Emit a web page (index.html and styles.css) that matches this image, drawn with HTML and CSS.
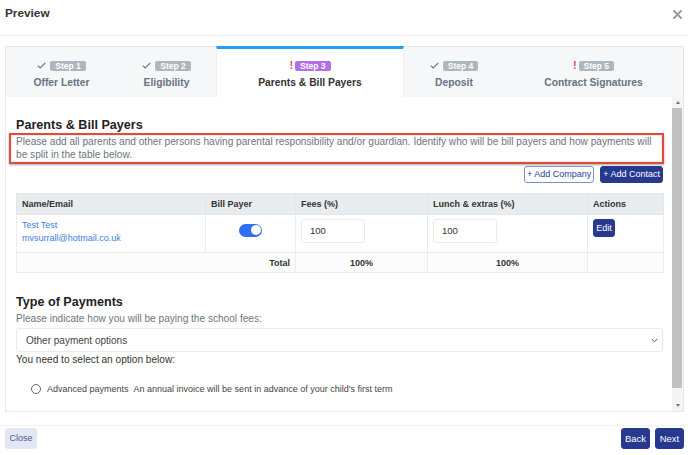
FILE: index.html
```html
<!DOCTYPE html>
<html lang="en">
<head>
<meta charset="utf-8">
<title>Preview</title>
<link rel="stylesheet" href="styles.css">
</head>
<body>
<div class="modal">
  <header class="modal-header">
    <h1 class="modal-title">Preview</h1>
    <svg class="close-x" width="9" height="9" viewBox="0 0 9 9"><path d="M1 1L8 8M8 1L1 8" stroke="#9a9a9a" stroke-width="2" stroke-linecap="round"/></svg>
  </header>

  <nav class="steps">
    <div class="step">
      <div class="step-top"><svg class="check" width="9" height="7" viewBox="0 0 9 7"><path d="M0.8 3.6L3.2 6L8.3 0.8" fill="none" stroke="#6c757d" stroke-width="1.2"/></svg><span class="badge">Step 1</span></div>
      <div class="step-label">Offer Letter</div>
    </div>
    <div class="step">
      <div class="step-top"><svg class="check" width="9" height="7" viewBox="0 0 9 7"><path d="M0.8 3.6L3.2 6L8.3 0.8" fill="none" stroke="#6c757d" stroke-width="1.2"/></svg><span class="badge">Step 2</span></div>
      <div class="step-label">Eligibility</div>
    </div>
    <div class="step active">
      <div class="step-top"><span class="bang">!</span><span class="badge purple">Step 3</span></div>
      <div class="step-label">Parents &amp; Bill Payers</div>
    </div>
    <div class="step">
      <div class="step-top"><svg class="check" width="9" height="7" viewBox="0 0 9 7"><path d="M0.8 3.6L3.2 6L8.3 0.8" fill="none" stroke="#6c757d" stroke-width="1.2"/></svg><span class="badge">Step 4</span></div>
      <div class="step-label">Deposit</div>
    </div>
    <div class="step">
      <div class="step-top"><span class="bang">!</span><span class="badge">Step 5</span></div>
      <div class="step-label">Contract Signatures</div>
    </div>
  </nav>

  <section class="panel">
    <div class="panel-content">
      <h2 class="section-title">Parents &amp; Bill Payers</h2>
      <p class="note">Please add all parents and other persons having parental responsibility and/or guardian. Identify who will be bill payers and how payments will be split in the table below.</p>
      <div class="table-actions">
        <button class="btn btn-outline">+ Add Company</button>
        <button class="btn btn-primary">+ Add Contact</button>
      </div>
      <table class="payers">
        <colgroup>
          <col class="c-name"><col class="c-bill"><col class="c-fees"><col class="c-lunch"><col class="c-act">
        </colgroup>
        <thead>
          <tr><th>Name/Email</th><th>Bill Payer</th><th>Fees (%)</th><th>Lunch &amp; extras (%)</th><th>Actions</th></tr>
        </thead>
        <tbody>
          <tr class="row">
            <td class="name-cell"><div class="link">Test Test</div><div class="link">mvsurrall@hotmail.co.uk</div></td>
            <td class="center"><span class="toggle"><span class="knob"></span></span></td>
            <td><div class="num-input">100</div></td>
            <td><div class="num-input">100</div></td>
            <td><button class="btn btn-primary btn-edit">Edit</button></td>
          </tr>
          <tr class="total">
            <td colspan="2" class="right">Total</td>
            <td class="center">100%</td>
            <td class="center">100%</td>
            <td></td>
          </tr>
        </tbody>
      </table>

      <h2 class="section-title second">Type of Payments</h2>
      <p class="help">Please indicate how you will be paying the school fees:</p>
      <div class="select">
        <span>Other payment options</span>
        <svg width="7" height="5" viewBox="0 0 7 5"><path d="M0.8 1L3.5 3.8L6.2 1" fill="none" stroke="#555" stroke-width="1"/></svg>
      </div>
      <p class="prompt">You need to select an option below:</p>
      <label class="radio-row"><span class="radio"></span><span>Advanced payments</span><span class="radio-desc">An annual invoice will be sent in advance of your child's first term</span></label>
    </div>
    <div class="scrollbar">
      <span class="arrow up"></span>
      <span class="track"><span class="thumb"></span></span>
      <span class="arrow down"></span>
    </div>
  </section>

  <footer class="modal-footer">
    <button class="btn btn-light">Close</button>
    <div class="footer-right">
      <button class="btn btn-primary btn-foot">Back</button>
      <button class="btn btn-primary btn-foot">Next</button>
    </div>
  </footer>
</div>
</body>
</html>
```

FILE: styles.css
```css
* { box-sizing: border-box; }
html, body { margin: 0; padding: 0; }
body {
  width: 688px;
  height: 455px;
  overflow: hidden;
  background: #fff;
  color: #333;
  font-family: "Liberation Sans", Arial, sans-serif;
}

.modal-header {
  height: 36px;
  border-bottom: 1px solid #e9ecef;
  display: flex;
  justify-content: space-between;
  align-items: flex-start;
  padding: 6px 6px 0 5px;
}
.modal-title {
  margin: 0;
  font-size: 11.8px;
  line-height: 14px;
  font-weight: bold;
  color: #333;
}
.close-x { margin-top: 4px; }

/* steps */
.steps {
  display: grid;
  grid-template-columns: 112px 99px 188px 100px 1fr;
  margin: 10px 4px 0 5px;
  height: 51px;
}
.step {
  background: #f5f7f9;
  border-top: 1px solid #e4e8ec;
  display: flex;
  flex-direction: column;
  align-items: center;
  padding-top: 13px;
  color: #68737f;
}
.step:first-child { border-left: 1px solid #e4e8ec; }
.step:last-child { border-right: 1px solid #e4e8ec; }
.step.active {
  background: #fff;
  border-top: 3px solid #1ea1f2;
  padding-top: 11px;
  color: #333;
  border-left: 1px solid #eef1f4;
  border-right: 1px solid #eef1f4;
}
.step-top {
  height: 11px;
  display: flex;
  align-items: center;
  gap: 4px;
}
.step.active .step-top, .step:last-child .step-top { gap: 2px; }
.badge {
  display: inline-block;
  background: #adb5bd;
  color: #fff;
  font-size: 8.5px;
  font-weight: bold;
  line-height: 10px;
  height: 10px;
  padding: 0 5px;
  border-radius: 2px;
}
.badge.purple { background: #b26ee6; }
.bang {
  color: #e8474c;
  font-weight: bold;
  font-size: 11px;
  line-height: 11px;
}
.step-label {
  margin-top: 5px;
  font-size: 10.3px;
  line-height: 13px;
  font-weight: bold;
}

/* panel */
.panel {
  margin: 0 4px 0 5px;
  height: 315px;
  border: 1px solid #e6e9ed;
  border-top: none;
  display: flex;
  overflow: hidden;
}
.panel-content {
  flex: 1;
  padding: 21px 9px 0 10px;
  overflow: hidden;
}
.section-title {
  margin: 0;
  font-size: 12.6px;
  line-height: 15px;
  font-weight: bold;
  color: #222;
}
.section-title.second { margin-top: 22px; }
.note {
  margin: 0 -1px 0 -7px;
  padding: 0 2px 0 5px;
  border: 2px solid #e24a3b;
  box-shadow: 0 1px 2px rgba(0,0,0,.35), inset 0 0 0 1px rgba(0,0,0,.07);
  font-size: 10.15px;
  line-height: 13.3px;
  color: #6c757d;
}
.table-actions {
  margin-top: 2.5px;
  display: flex;
  justify-content: flex-end;
  gap: 6px;
}
.btn {
  font-family: "Liberation Sans", Arial, sans-serif;
  font-size: 9px;
  height: 17px;
  line-height: 15px;
  padding: 0 2px;
  border-radius: 3px;
  border: 1px solid #26398f;
  cursor: pointer;
}
.btn-outline { background: #fff; color: #2d4294; border-color: #7d8fc9; }
.btn-primary { background: #26398f; color: #fff; }

.payers {
  margin-top: 10px;
  width: 647px;
  border-collapse: collapse;
  table-layout: fixed;
  font-size: 9px;
}
.c-name { width: 189px; }
.c-bill { width: 90px; }
.c-fees { width: 132px; }
.c-lunch { width: 160px; }
.c-act { width: 76px; }
.payers th {
  background: #e9ecef;
  height: 21px;
  padding: 0 5px;
  text-align: left;
  font-weight: bold;
  color: #333;
  border: 1px solid #e2e6ea;
}
.payers td {
  border: 1px solid #e9ecef;
  padding: 3.5px 5px 0;
  vertical-align: top;
}
.row td { height: 38px; }
.link { color: #3d7de0; line-height: 13px; }
.center { text-align: center; }
.right { text-align: right; }
.toggle {
  display: inline-block;
  margin-top: 5px;
  width: 23px;
  height: 13px;
  border-radius: 7px;
  background: #2f6ff2;
  position: relative;
}
.knob {
  position: absolute;
  right: 1.5px;
  top: 1.5px;
  width: 10px;
  height: 10px;
  border-radius: 50%;
  background: #fff;
}
.num-input {
  width: 64px;
  height: 24px;
  border: 1px solid #e6e9ed;
  border-radius: 3px;
  padding-left: 8px;
  font-size: 9.5px;
  line-height: 22px;
  color: #333;
}
.btn-edit { height: 18px; width: 22px; padding: 0; line-height: 16px; }
.total td {
  height: 20px;
  vertical-align: middle;
  padding: 0 5px;
  font-weight: bold;
  background: #fcfcfd;
}

.help {
  margin: 1.5px 0 0;
  font-size: 10.1px;
  line-height: 13px;
  color: #6c757d;
}
.select {
  margin-top: 3.5px;
  height: 24px;
  border: 1px solid #e6e9ed;
  border-radius: 3px;
  display: flex;
  align-items: center;
  justify-content: space-between;
  padding: 0 4px 0 9px;
  font-size: 10px;
  color: #444;
}
.prompt {
  margin: 1px 0 0;
  font-size: 10.1px;
  line-height: 13px;
  color: #333;
}
.radio-row {
  margin-top: 16.5px;
  padding-left: 15px;
  display: flex;
  align-items: center;
  height: 13px;
  font-size: 9px;
  color: #444;
}
.radio {
  width: 10px;
  height: 10px;
  border: 1px solid #666;
  border-radius: 50%;
  margin-right: 6px;
}
.radio-desc { margin-left: 5px; }

/* fake scrollbar */
.scrollbar {
  width: 11px;
  display: flex;
  flex-direction: column;
  align-items: center;
  background: #f4f4f4;
}
.arrow {
  width: 0;
  height: 0;
  border-left: 2.5px solid transparent;
  border-right: 2.5px solid transparent;
}
.arrow.up { border-bottom: 3px solid #707070; margin: 4px 0 4px; }
.arrow.down { border-top: 3px solid #707070; margin: 5px 0 4px; }
.track { flex: 1; width: 100%; display: flex; flex-direction: column; padding: 0 0 11px; }
.thumb { flex: 1; background: #c1c1c1; margin: 0 1px 0 0; }

/* footer */
.modal-footer {
  margin-top: 13px;
  border-top: 1px solid #eef0f3;
  padding: 2px 4px 0 5px;
  display: flex;
  justify-content: space-between;
}
.btn-light {
  height: 21px;
  width: 32px;
  padding: 0;
  background: #e3e7f1;
  border-color: #e3e7f1;
  color: #4a5b92;
  line-height: 19px;
}
.footer-right { display: flex; gap: 5px; }
.btn-foot { height: 21px; width: 29px; padding: 0; line-height: 19px; font-size: 9.5px; }
```
